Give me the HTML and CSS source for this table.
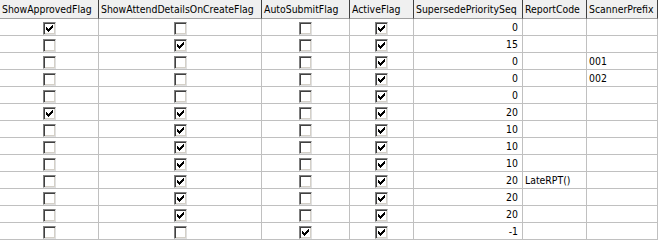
FILE: index.html
```
<!DOCTYPE html>
<html>
<head>
<meta charset="utf-8">
<link rel="stylesheet" href="styles.css">
</head>
<body>
<table class="grid">
  <colgroup>
    <col class="c1"><col class="c2"><col class="c3"><col class="c4"><col class="c5"><col class="c6"><col class="c7">
  </colgroup>
  <thead>
    <tr>
      <th>ShowApprovedFlag</th>
      <th>ShowAttendDetailsOnCreateFlag</th>
      <th>AutoSubmitFlag</th>
      <th>ActiveFlag</th>
      <th>SupersedePrioritySeq</th>
      <th>ReportCode</th>
      <th>ScannerPrefix</th>
    </tr>
  </thead>
  <tbody>
    <tr><td class="cb"><span class="box on"><svg viewBox="0 0 13 13"><path d="M3 5V8H4V9H5V10H6V9H7V8H8V7H9V6H10V3H9V4H8V5H7V6H6V7H5V6H4V5Z"/></svg></span></td><td class="cb"><span class="box"></span></td><td class="cb"><span class="box"></span></td><td class="cb"><span class="box on"><svg viewBox="0 0 13 13"><path d="M3 5V8H4V9H5V10H6V9H7V8H8V7H9V6H10V3H9V4H8V5H7V6H6V7H5V6H4V5Z"/></svg></span></td><td class="num">0</td><td></td><td></td></tr>
    <tr><td class="cb"><span class="box"></span></td><td class="cb"><span class="box on"><svg viewBox="0 0 13 13"><path d="M3 5V8H4V9H5V10H6V9H7V8H8V7H9V6H10V3H9V4H8V5H7V6H6V7H5V6H4V5Z"/></svg></span></td><td class="cb"><span class="box"></span></td><td class="cb"><span class="box on"><svg viewBox="0 0 13 13"><path d="M3 5V8H4V9H5V10H6V9H7V8H8V7H9V6H10V3H9V4H8V5H7V6H6V7H5V6H4V5Z"/></svg></span></td><td class="num">15</td><td></td><td></td></tr>
    <tr><td class="cb"><span class="box"></span></td><td class="cb"><span class="box"></span></td><td class="cb"><span class="box"></span></td><td class="cb"><span class="box on"><svg viewBox="0 0 13 13"><path d="M3 5V8H4V9H5V10H6V9H7V8H8V7H9V6H10V3H9V4H8V5H7V6H6V7H5V6H4V5Z"/></svg></span></td><td class="num">0</td><td></td><td>001</td></tr>
    <tr><td class="cb"><span class="box"></span></td><td class="cb"><span class="box"></span></td><td class="cb"><span class="box"></span></td><td class="cb"><span class="box on"><svg viewBox="0 0 13 13"><path d="M3 5V8H4V9H5V10H6V9H7V8H8V7H9V6H10V3H9V4H8V5H7V6H6V7H5V6H4V5Z"/></svg></span></td><td class="num">0</td><td></td><td>002</td></tr>
    <tr><td class="cb"><span class="box"></span></td><td class="cb"><span class="box"></span></td><td class="cb"><span class="box"></span></td><td class="cb"><span class="box on"><svg viewBox="0 0 13 13"><path d="M3 5V8H4V9H5V10H6V9H7V8H8V7H9V6H10V3H9V4H8V5H7V6H6V7H5V6H4V5Z"/></svg></span></td><td class="num">0</td><td></td><td></td></tr>
    <tr><td class="cb"><span class="box on"><svg viewBox="0 0 13 13"><path d="M3 5V8H4V9H5V10H6V9H7V8H8V7H9V6H10V3H9V4H8V5H7V6H6V7H5V6H4V5Z"/></svg></span></td><td class="cb"><span class="box on"><svg viewBox="0 0 13 13"><path d="M3 5V8H4V9H5V10H6V9H7V8H8V7H9V6H10V3H9V4H8V5H7V6H6V7H5V6H4V5Z"/></svg></span></td><td class="cb"><span class="box"></span></td><td class="cb"><span class="box on"><svg viewBox="0 0 13 13"><path d="M3 5V8H4V9H5V10H6V9H7V8H8V7H9V6H10V3H9V4H8V5H7V6H6V7H5V6H4V5Z"/></svg></span></td><td class="num">20</td><td></td><td></td></tr>
    <tr><td class="cb"><span class="box"></span></td><td class="cb"><span class="box on"><svg viewBox="0 0 13 13"><path d="M3 5V8H4V9H5V10H6V9H7V8H8V7H9V6H10V3H9V4H8V5H7V6H6V7H5V6H4V5Z"/></svg></span></td><td class="cb"><span class="box"></span></td><td class="cb"><span class="box on"><svg viewBox="0 0 13 13"><path d="M3 5V8H4V9H5V10H6V9H7V8H8V7H9V6H10V3H9V4H8V5H7V6H6V7H5V6H4V5Z"/></svg></span></td><td class="num">10</td><td></td><td></td></tr>
    <tr><td class="cb"><span class="box"></span></td><td class="cb"><span class="box on"><svg viewBox="0 0 13 13"><path d="M3 5V8H4V9H5V10H6V9H7V8H8V7H9V6H10V3H9V4H8V5H7V6H6V7H5V6H4V5Z"/></svg></span></td><td class="cb"><span class="box"></span></td><td class="cb"><span class="box on"><svg viewBox="0 0 13 13"><path d="M3 5V8H4V9H5V10H6V9H7V8H8V7H9V6H10V3H9V4H8V5H7V6H6V7H5V6H4V5Z"/></svg></span></td><td class="num">10</td><td></td><td></td></tr>
    <tr><td class="cb"><span class="box"></span></td><td class="cb"><span class="box on"><svg viewBox="0 0 13 13"><path d="M3 5V8H4V9H5V10H6V9H7V8H8V7H9V6H10V3H9V4H8V5H7V6H6V7H5V6H4V5Z"/></svg></span></td><td class="cb"><span class="box"></span></td><td class="cb"><span class="box on"><svg viewBox="0 0 13 13"><path d="M3 5V8H4V9H5V10H6V9H7V8H8V7H9V6H10V3H9V4H8V5H7V6H6V7H5V6H4V5Z"/></svg></span></td><td class="num">10</td><td></td><td></td></tr>
    <tr><td class="cb"><span class="box"></span></td><td class="cb"><span class="box on"><svg viewBox="0 0 13 13"><path d="M3 5V8H4V9H5V10H6V9H7V8H8V7H9V6H10V3H9V4H8V5H7V6H6V7H5V6H4V5Z"/></svg></span></td><td class="cb"><span class="box"></span></td><td class="cb"><span class="box on"><svg viewBox="0 0 13 13"><path d="M3 5V8H4V9H5V10H6V9H7V8H8V7H9V6H10V3H9V4H8V5H7V6H6V7H5V6H4V5Z"/></svg></span></td><td class="num">20</td><td>LateRPT()</td><td></td></tr>
    <tr><td class="cb"><span class="box"></span></td><td class="cb"><span class="box on"><svg viewBox="0 0 13 13"><path d="M3 5V8H4V9H5V10H6V9H7V8H8V7H9V6H10V3H9V4H8V5H7V6H6V7H5V6H4V5Z"/></svg></span></td><td class="cb"><span class="box"></span></td><td class="cb"><span class="box on"><svg viewBox="0 0 13 13"><path d="M3 5V8H4V9H5V10H6V9H7V8H8V7H9V6H10V3H9V4H8V5H7V6H6V7H5V6H4V5Z"/></svg></span></td><td class="num">20</td><td></td><td></td></tr>
    <tr><td class="cb"><span class="box"></span></td><td class="cb"><span class="box on"><svg viewBox="0 0 13 13"><path d="M3 5V8H4V9H5V10H6V9H7V8H8V7H9V6H10V3H9V4H8V5H7V6H6V7H5V6H4V5Z"/></svg></span></td><td class="cb"><span class="box"></span></td><td class="cb"><span class="box on"><svg viewBox="0 0 13 13"><path d="M3 5V8H4V9H5V10H6V9H7V8H8V7H9V6H10V3H9V4H8V5H7V6H6V7H5V6H4V5Z"/></svg></span></td><td class="num">20</td><td></td><td></td></tr>
    <tr><td class="cb"><span class="box"></span></td><td class="cb"><span class="box"></span></td><td class="cb"><span class="box on"><svg viewBox="0 0 13 13"><path d="M3 5V8H4V9H5V10H6V9H7V8H8V7H9V6H10V3H9V4H8V5H7V6H6V7H5V6H4V5Z"/></svg></span></td><td class="cb"><span class="box on"><svg viewBox="0 0 13 13"><path d="M3 5V8H4V9H5V10H6V9H7V8H8V7H9V6H10V3H9V4H8V5H7V6H6V7H5V6H4V5Z"/></svg></span></td><td class="num">-1</td><td></td><td></td></tr>
  </tbody>
</table>
</body>
</html>
```
FILE: styles.css
```
html, body {
  margin: 0;
  padding: 0;
  background: #ffffff;
}
.grid {
  border-collapse: separate;
  border-spacing: 0;
  table-layout: fixed;
  width: 658px;
  font-family: "DejaVu Sans Condensed", "DejaVu Sans", sans-serif;
  font-size: 10.4px;
  color: #000000;
}
.c1 { width: 99px; }
.c2 { width: 163px; }
.c3 { width: 88px; }
.c4 { width: 64px; }
.c5 { width: 109px; }
.c6 { width: 64px; }
.c7 { width: 71px; }
.grid th, .grid td {
  box-sizing: border-box;
  padding: 0 2px;
  white-space: nowrap;
  overflow: hidden;
}
.grid th {
  height: 19px;
  background: #f0f0f0;
  font-weight: normal;
  text-align: left;
  border-right: 1px solid #404040;
  border-bottom: 1px solid #a0a0a0;
}
.grid td {
  height: 17px;
  border-right: 1px solid #c0c0c0;
  border-bottom: 1px solid #c0c0c0;
  line-height: 16px;
}
.grid td.num {
  text-align: right;
  padding-right: 4px;
}
.grid td.cb {
  text-align: center;
  padding: 0;
}
.box {
  display: inline-block;
  width: 13px;
  height: 13px;
  box-sizing: border-box;
  vertical-align: middle;
  background: #ffffff;
  border-top: 1px solid #808080;
  border-left: 1px solid #808080;
  border-right: 1px solid #e0e0e0;
  border-bottom: 1px solid #e0e0e0;
  box-shadow: inset 1px 1px 0 #404040, inset -1px -1px 0 #d4d0c8;
  position: relative;
}
.box svg {
  position: absolute;
  left: -1px;
  top: -1px;
  width: 13px;
  height: 13px;
  shape-rendering: crispEdges;
  fill: #000000;
}
```
